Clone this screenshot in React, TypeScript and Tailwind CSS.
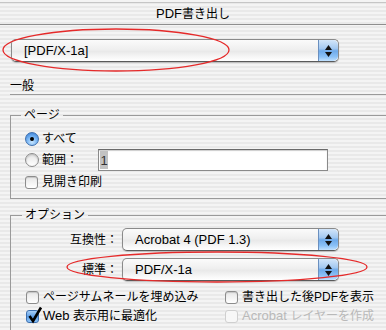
import React from "react";

function Stepper() {
  return (
    <div className="flex h-full w-[20px] flex-col items-center justify-center gap-[2px] rounded-r-[5px] border-l border-[#6a8fbf] bg-[linear-gradient(180deg,#d3e6fa_0%,#a4c9f1_40%,#6eaaea_52%,#8cc2f7_80%,#c2e2ff_100%)]">
      <svg width="7" height="5" viewBox="0 0 7 5">
        <polygon points="3.5,0 7,5 0,5" fill="#111" />
      </svg>
      <svg width="7" height="5" viewBox="0 0 7 5">
        <polygon points="0,0 7,0 3.5,5" fill="#111" />
      </svg>
    </div>
  );
}

function Popup({ text, width }: { text: string; width: string }) {
  return (
    <div
      className={`flex h-[23px] items-stretch rounded-[5px] border border-[#8a8a8a] border-b-[#5a5a5a] bg-[linear-gradient(180deg,#fbfbfb_0%,#efefef_45%,#e9e9e9_55%,#f6f6f6_80%,#ffffff_100%)] shadow-[0_1px_1px_rgba(0,0,0,0.2)] ${width}`}
    >
      <div className="flex flex-1 items-center pl-[12px] text-[13px] leading-none">{text}</div>
      <Stepper />
    </div>
  );
}

function Radio({ checked }: { checked?: boolean }) {
  return checked ? (
    <span className="flex h-[14px] w-[14px] shrink-0 items-center justify-center rounded-full border border-[#3d6fae] bg-[radial-gradient(circle_at_50%_75%,#c8e6ff_0%,#74b2f2_50%,#2e76cf_100%)]">
      <span className="h-[4px] w-[4px] rounded-full bg-black" />
    </span>
  ) : (
    <span className="h-[14px] w-[14px] shrink-0 rounded-full border border-[#8c8c8c] bg-[linear-gradient(180deg,#e4e4e4_0%,#ffffff_100%)] shadow-[inset_0_1px_2px_rgba(0,0,0,0.2)]" />
  );
}

function Check({ checked, disabled }: { checked?: boolean; disabled?: boolean }) {
  if (checked) {
    return (
      <span className="relative h-[13px] w-[13px] shrink-0 rounded-[3px] border border-[#3d6fae] bg-[linear-gradient(180deg,#a9d0f7_0%,#5d9ee6_50%,#8dc4f8_100%)]">
        <svg className="absolute -top-[5px] left-[0px]" width="16" height="18" viewBox="0 0 16 18">
          <path d="M2.5 10 L6 15 L14 1.5" fill="none" stroke="#000" strokeWidth="2.6" strokeLinejoin="miter" />
        </svg>
      </span>
    );
  }
  return (
    <span
      className={
        disabled
          ? "h-[13px] w-[13px] shrink-0 rounded-[3px] border border-[#cfcfcf] bg-[#f7f7f7]"
          : "h-[13px] w-[13px] shrink-0 rounded-[3px] border border-[#8c8c8c] bg-[linear-gradient(180deg,#e6e6e6_0%,#ffffff_100%)] shadow-[inset_0_1px_1px_rgba(0,0,0,0.15)]"
      }
    />
  );
}

function GroupHeader({ label, lead }: { label: string; lead: string }) {
  return (
    <div className="-ml-px -mt-[7px] flex h-[15px] items-center">
      <div className={`h-px bg-[#9a9a9a] ${lead}`} />
      <span className="px-[3px] leading-[15px]">{label}</span>
      <div className="h-px flex-1 bg-[#9a9a9a]" />
    </div>
  );
}

export default function App() {
  return (
    <div className="relative h-[330px] w-[386px] overflow-hidden bg-[repeating-linear-gradient(180deg,#f4f4f4_0px,#f4f4f4_2px,#e9e9e9_2px,#e9e9e9_4px)] font-['Liberation_Sans','Noto_Sans_CJK_JP',sans-serif] text-[12px] text-black">
      <div className="h-[2px]" />
      <div className="flex h-[23px] items-center justify-center border-t border-b border-t-[#c6c6c6] border-b-[#8e8e8e] leading-none">
        <span className="text-[13px]">PDF</span>書き出し
      </div>

      <div className="pl-[11px] pt-[14px]">
        <Popup text="[PDF/X-1a]" width="w-[328px]" />
      </div>

      <div className="ml-[10px] mt-[17px] h-[16px] border-b border-[#9a9a9a] leading-[15px]">一般</div>

      <div className="ml-[10px] mr-[-10px] mt-[20px] flex flex-col border-b border-l border-[#9a9a9a]">
        <GroupHeader label="ページ" lead="w-[11px]" />
        <div className="flex flex-col pb-[6px] pl-[14px]">
          <div className="mt-[6px] flex h-[20px] items-center gap-[3px]">
            <Radio checked />
            <span>すべて</span>
          </div>
          <div className="flex h-[22px] items-center gap-[3px]">
            <Radio />
            <span className="w-[53px]">範囲：</span>
            <div className="flex h-[22px] w-[230px] items-center border border-[#8a8a8a] border-t-[#6a6a6a] bg-white pl-[1px] shadow-[inset_0_1px_1px_rgba(0,0,0,0.2)]">
              <span className="flex h-[18px] w-[8px] items-center justify-center bg-[#c2c2c2] text-[13px] leading-none text-[#333]">1</span>
            </div>
          </div>
          <div className="mt-[1px] flex h-[20px] items-center gap-[4px]">
            <Check />
            <span>見開き印刷</span>
          </div>
        </div>
      </div>

      <div className="ml-[10px] mr-[-10px] mt-[16px] flex h-[140px] flex-col border-l border-[#9a9a9a]">
        <GroupHeader label="オプション" lead="w-[12px]" />
        <div className="mt-[5px] flex items-center">
          <span className="w-[107px] text-right">互換性：</span>
          <div className="pl-[4px]">
            <Popup text="Acrobat 4 (PDF 1.3)" width="w-[217px]" />
          </div>
        </div>
        <div className="mt-[7px] flex items-center">
          <span className="w-[107px] text-right">標準：</span>
          <div className="pl-[4px]">
            <Popup text="PDF/X-1a" width="w-[217px]" />
          </div>
        </div>
        <div className="mt-[7px] grid grid-cols-[199px_1fr] pl-[15px]">
          <div className="flex h-[18px] items-center gap-[4px]">
            <Check />
            <span>ページサムネールを埋め込み</span>
          </div>
          <div className="flex h-[18px] items-center gap-[4px]">
            <Check />
            <span>書き出した後PDFを表示</span>
          </div>
          <div className="mt-[1px] flex h-[18px] items-center gap-[4px]">
            <Check checked />
            <span>
              <span className="text-[13px]">Web </span>表示用に最適化
            </span>
          </div>
          <div className="mt-[1px] flex h-[18px] items-center gap-[4px]">
            <Check disabled />
            <span className="text-[#b9b9b9]">
              <span className="text-[13px]">Acrobat </span>レイヤーを作成
            </span>
          </div>
        </div>
      </div>

      <svg className="pointer-events-none absolute left-0 top-0" width="386" height="330" viewBox="0 0 386 330">
        <ellipse cx="116" cy="50" rx="113" ry="21" fill="none" stroke="#e52a2a" strokeWidth="1.3" />
        <ellipse cx="217" cy="267" rx="150" ry="15" fill="none" stroke="#e52a2a" strokeWidth="1.3" />
      </svg>
    </div>
  );
}
